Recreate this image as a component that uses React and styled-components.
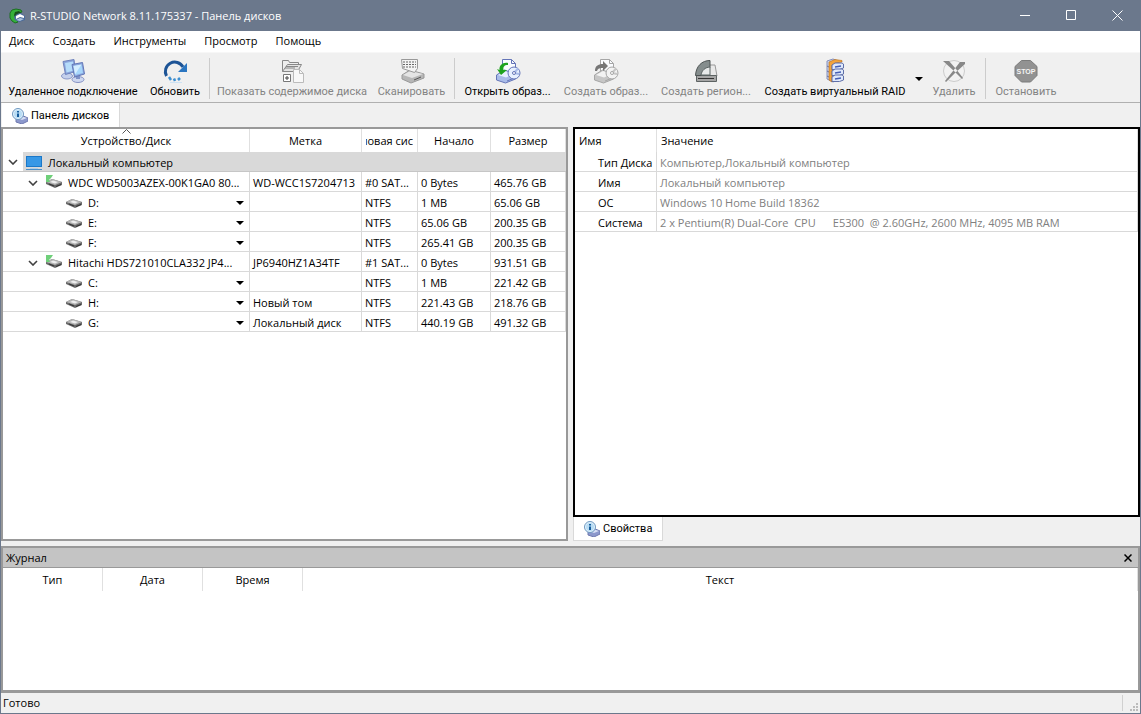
import React from "react";
import styled, { createGlobalStyle } from "styled-components";

const disks = [
  {
    id: "wdc",
    name: "WDC WD5003AZEX-00K1GA0 80...",
    label: "WD-WCC1S7204713",
    fs: "#0 SAT...",
    start: "0 Bytes",
    size: "465.76 GB",
    volumes: [
      { id: "d", name: "D:", label: "", fs: "NTFS", start: "1 MB", size: "65.06 GB" },
      { id: "e", name: "E:", label: "", fs: "NTFS", start: "65.06 GB", size: "200.35 GB" },
      { id: "f", name: "F:", label: "", fs: "NTFS", start: "265.41 GB", size: "200.35 GB" }
    ]
  },
  {
    id: "hitachi",
    name: "Hitachi HDS721010CLA332 JP4...",
    label: "JP6940HZ1A34TF",
    fs: "#1 SAT...",
    start: "0 Bytes",
    size: "931.51 GB",
    volumes: [
      { id: "c", name: "C:", label: "", fs: "NTFS", start: "1 MB", size: "221.42 GB" },
      { id: "h", name: "H:", label: "Новый том", fs: "NTFS", start: "221.43 GB", size: "218.76 GB" },
      { id: "g", name: "G:", label: "Локальный диск", fs: "NTFS", start: "440.19 GB", size: "491.32 GB" }
    ]
  }
];

const properties = [
  { name: "Тип Диска", value: "Компьютер,Локальный компьютер" },
  { name: "Имя", value: "Локальный компьютер" },
  { name: "ОС", value: "Windows 10 Home Build 18362" },
  {
    name: "Система",
    value: "2 x Pentium(R) Dual-Core  CPU      E5300  @ 2.60GHz, 2600 MHz, 4095 MB RAM"
  }
];

const menu = ["Диск", "Создать", "Инструменты", "Просмотр", "Помощь"];

const tools = [
  [
    { text: "Удаленное подключение", width: 140, icon: <RemoteIcon /> },
    { text: "Обновить", width: 62, icon: <RefreshIcon /> }
  ],
  [
    { text: "Показать содержимое диска", width: 158, icon: <FolderIcon />, disabled: true },
    { text: "Сканировать", width: 79, icon: <ScanIcon />, disabled: true }
  ],
  [
    { text: "Открыть образ...", width: 99, icon: <ImageIcon open /> },
    { text: "Создать образ...", width: 96, icon: <ImageIcon />, disabled: true },
    { text: "Создать регион...", width: 102, icon: <RegionIcon />, disabled: true },
    { text: "Создать виртуальный RAID", width: 154, icon: <RaidIcon />, arrow: true },
    { text: "Удалить", width: 56, icon: <DeleteIcon />, disabled: true }
  ],
  [{ text: "Остановить", width: 74, icon: <StopIcon />, disabled: true }]
];

export default function App() {
  return (
    <>
      <GlobalStyle />
      <Window>
        <TitleBar>
          <LogoIcon />
          <Title>R-STUDIO Network 8.11.175337 - Панель дисков</Title>
          <Caption aria-label="Свернуть">
            <svg width="11" height="11" stroke="#fff">
              <path d="M0 5.5h10" />
            </svg>
          </Caption>
          <Caption aria-label="Развернуть">
            <svg width="11" height="11" stroke="#fff" fill="none">
              <path d="M.5 .5h9v9h-9z" />
            </svg>
          </Caption>
          <Caption aria-label="Закрыть">
            <svg width="11" height="11" stroke="#fff">
              <path d="M.5 .5l10 10M10.500 .5l-10 10" />
            </svg>
          </Caption>
        </TitleBar>

        <Menu>
          {menu.map(item => (
            <MenuItem key={item}>{item}</MenuItem>
          ))}
        </Menu>

        <Toolbar>
          {tools.map((group, i) => (
            <Group key={i}>
              {group.map(tool => (
                <React.Fragment key={tool.text}>
                  <Tool $width={tool.width} disabled={tool.disabled}>
                    {tool.icon}
                    <span>{tool.text}</span>
                  </Tool>
                  {tool.arrow && (
                    <ToolArrow aria-label="Типы RAID">
                      <ArrowIcon />
                    </ToolArrow>
                  )}
                </React.Fragment>
              ))}
            </Group>
          ))}
        </Toolbar>

        <TopTabs>
          <Tab>
            <InfoDiskIcon />
            Панель дисков
          </Tab>
        </TopTabs>

        <Main>
          <Column>
            <Panel $color="#999">
              <DiskTable />
            </Panel>
          </Column>
          <Column>
            <Panel $color="#000">
              <PropertyTable />
            </Panel>
            <BottomTabs>
              <Tab $bottom>
                <InfoDiskIcon />
                Свойства
              </Tab>
            </BottomTabs>
          </Column>
        </Main>

        <Log>
          <LogTitle>
            <span>Журнал</span>
            <LogClose aria-label="Закрыть журнал">
              <svg width="8" height="8" stroke="#000" strokeWidth="1.500">
                <path d="M.5 .5l7 7M7.500 .5l-7 7" />
              </svg>
            </LogClose>
          </LogTitle>
          <Table>
            <colgroup>
              <col width="100" />
              <col width="100" />
              <col width="100" />
              <col />
            </colgroup>
            <thead>
              <tr>
                <Th>Тип</Th>
                <Th>Дата</Th>
                <Th>Время</Th>
                <Th>Текст</Th>
              </tr>
            </thead>
          </Table>
        </Log>

        <Status>
          <span>Готово</span>
          <Grip>
            <svg width="8" height="8" fill="#bbb">
              <path d="M6 0h2v2h-2zM3 3h2v2h-2zM6 3h2v2h-2zM0 6h2v2h-2zM3 6h2v2h-2zM6 6h2v2h-2z" />
            </svg>
          </Grip>
        </Status>
      </Window>
    </>
  );
}

function DiskTable() {
  return (
    <Table>
      <colgroup>
        <col />
        <col width="112" />
        <col width="56" />
        <col width="73" />
        <col width="75" />
      </colgroup>
      <thead>
        <tr>
          <Th>
            <SortMark>
              <svg width="9" height="5" stroke="#555" fill="none">
                <path d="M.5 4.500l4-4 4 4" />
              </svg>
            </SortMark>
            Устройство/Диск
          </Th>
          <Th>Метка</Th>
          <Th>
            <Clip>
              <span>ловая сис</span>
            </Clip>
          </Th>
          <Th>Начало</Th>
          <Th>Размер</Th>
        </tr>
      </thead>
      <tbody>
        <tr>
          <RootCell colSpan={5}>
            <RootLine>
              <Expander aria-label="Свернуть ветвь">
                <ChevronIcon />
              </Expander>
              <Selected>
                <MonitorIcon />
                <span>Локальный компьютер</span>
              </Selected>
            </RootLine>
          </RootCell>
        </tr>
        {disks.map(disk => (
          <React.Fragment key={disk.id}>
            <tr>
              <Td>
                <Node $level={1}>
                  <Expander aria-label="Свернуть ветвь">
                    <ChevronIcon />
                  </Expander>
                  <DriveIcon online />
                  <Name>{disk.name}</Name>
                </Node>
              </Td>
              <Cells row={disk} />
            </tr>
            {disk.volumes.map(volume => (
              <tr key={volume.id}>
                <Td>
                  <Node $level={3}>
                    <DriveIcon />
                    <Name>{volume.name}</Name>
                    <VolumeMenu aria-label={volume.name}>
                      <ArrowIcon />
                    </VolumeMenu>
                  </Node>
                </Td>
                <Cells row={volume} />
              </tr>
            ))}
          </React.Fragment>
        ))}
      </tbody>
    </Table>
  );
}

function Cells({ row }) {
  return (
    <>
      <Td>{row.label}</Td>
      <Td>{row.fs}</Td>
      <Td>{row.start}</Td>
      <Td>{row.size}</Td>
    </>
  );
}

function PropertyTable() {
  return (
    <Table>
      <colgroup>
        <col width="82" />
        <col />
      </colgroup>
      <thead>
        <tr>
          <Th $left>Имя</Th>
          <Th $left>Значение</Th>
        </tr>
      </thead>
      <tbody>
        {properties.map(item => (
          <tr key={item.name}>
            <PropName>{item.name}</PropName>
            <PropValue>{item.value}</PropValue>
          </tr>
        ))}
      </tbody>
    </Table>
  );
}

function LogoIcon() {
  return (
    <svg width="16" height="16" viewBox="0 0 16 16">
      <path d="M3 2l4-1 5 1 1 2-4 1-3 3 1 4 2 2-3 1-3-2-2-3V5z" fill="#35b03a" stroke="#1c6e22" />
      <path d="M6 4l4-1 2 2-4 1-2 3-1-2z" fill="#174d1d" />
      <path d="M5 9l3-3 4-1 4 3v4l-6 2-4-2z" fill="#4a6a9a" />
      <path d="M7 8l4-2 4 2v2l-4-1-4 2z" fill="#fff" />
      <path d="M7 12l4-2 4 1-4 2z" fill="#a9c0dc" />
    </svg>
  );
}

function RemoteIcon() {
  return (
    <svg width="26" height="26" viewBox="0 0 26 26">
      <ellipse cx="7" cy="18" rx="5.500" ry="3" fill="#c4d0ec" stroke="#8a98c8" />
      <path d="M3 3.500l11-2 1.500 12-10 3z" fill="#8aa5dc" stroke="#6f83bd" />
      <path d="M5 5l8-1.500 1 9-7.500 2z" fill="#b5dcfa" />
      <ellipse cx="18" cy="21.500" rx="6" ry="3" fill="#cdd7f0" stroke="#8592c4" />
      <path d="M16 17h4v4h-4z" fill="#7f92c8" />
      <path d="M12 6.500l10.500-2 2 11.500-10 3z" fill="#8aa5dc" stroke="#6378b8" />
      <path d="M13.500 8l8-1.500 1.500 8.500-7.500 2z" fill="#a6d6fb" />
      <path d="M13.500 8l8-1.500-6.500 10z" fill="#d4eeff" />
    </svg>
  );
}

function RefreshIcon() {
  return (
    <svg width="26" height="26" viewBox="0 0 26 26">
      <path d="M4.500 18A9 9 0 0 1 21 9" fill="none" stroke="#1d5496" strokeWidth="3" />
      <path d="M25 5v9h-9z" fill="#2b76c1" />
      <path d="M7 19l2 3M12 20.500l1 2.500M16 22l2-2" stroke="#3d8fd1" strokeWidth="2.500" />
      <path d="M8 24.500h12" stroke="#cfe3f3" />
    </svg>
  );
}

function FolderIcon() {
  return (
    <svg width="26" height="26" viewBox="0 0 26 26" fill="#eee" stroke="#888">
      <path d="M3.500 13.500v-11h6l1 2h9v4" />
      <path d="M3.500 13.500l5-7h14l-4 7z" fill="#e4e4e4" />
      <path d="M6 10h10M7 8.500h12" />
      <path d="M4.500 16.500h7v7h-7z" fill="#fff" stroke="#777" />
      <path d="M8 18v4M6 20h4" stroke="#444" />
      <path d="M14.500 11.500h6l4 4v9h-10z" fill="#f8f8f8" stroke="#bbb" />
      <path d="M20.500 11.500v4h4" fill="none" stroke="#bbb" />
    </svg>
  );
}

function ScanIcon() {
  return (
    <svg width="26" height="26" viewBox="0 0 26 26">
      <path d="M3 17l8-5 14 4v4l-13 5-9-4z" fill="#b6b6b6" stroke="#999" />
      <path d="M4 17l7-4 13 3-11 4z" fill="#e4e4e4" />
      <path d="M15 22l7-3" stroke="#555" />
      <path d="M2.500 1.500h16v9l-3 4-12-4z" fill="#f4f4f4" stroke="#999" />
      <path d="M4 4h13M4 6.500h13M4 9h13" stroke="#666" strokeDasharray="2 1" />
    </svg>
  );
}

function ImageIcon({ open }) {
  const c = open
    ? { line: "#6575b8", disk: "#a9bce9", light: "#e7f0ff", arrow: "#1fa31f" }
    : { line: "#a6a6a6", disk: "#c6c6c6", light: "#f3f3f3", arrow: "#777" };

  return (
    <svg width="26" height="26" viewBox="0 0 26 26">
      <path d="M7.500 1.500h9l4 4v12h-13z" fill="#fafcff" stroke={c.line} />
      <path d="M16.500 1.500v4h4" fill="none" stroke={c.line} />
      <path d="M1.500 17l8-5 11 4v5l-10 4-9-3z" fill={c.disk} stroke={c.line} />
      <path d="M3 17l7-4 9 3-8 3.500z" fill={c.light} />
      <path d="M12 23l6-2.500" stroke={c.line} />
      <circle cx="19" cy="15" r="6" fill={c.light} stroke={c.line} />
      <path d="M19 15l4-4.500M19 15l5 1" stroke={c.disk} strokeWidth="2" />
      <circle cx="19" cy="15" r="1.500" fill="#fff" stroke={c.line} />
      {open ? (
        <path d="M13 5C8 4 4 7 4.500 12L2 11l4 6 6-5-3.500 0C8 9 9 7 13 7z" fill={c.arrow} />
      ) : (
        <path d="M2 13C2 8 5 6 10 6V3l5 5-5 5v-3C7 10 5 10 4 13z" fill={c.arrow} />
      )}
    </svg>
  );
}

function RegionIcon() {
  return (
    <svg width="26" height="26" viewBox="0 0 26 26">
      <path d="M17 7h5l2 11H8z" fill="#e9e9e9" stroke="#999" />
      <path d="M3.500 17.500h20v6h-20z" fill="#a5a5a5" stroke="#5d6363" />
      <path d="M5 20.500h16" stroke="#333" />
      <path d="M2.500 17.500C3 8 9 2.500 17 2.500v7c-5 0-8 4-9 8z" fill="#858d8d" stroke="#4d5353" />
      <path d="M8 17C9 12 12 9.500 17 9V17z" fill="#e8eaea" stroke="#5d6666" />
    </svg>
  );
}

function RaidIcon() {
  return (
    <svg width="26" height="26" viewBox="0 0 26 26">
      <path d="M5 3l6-2 5 2v19l-5 2-6-3z" fill="#c9d4ee" stroke="#8690bd" />
      <path d="M5 8l4 2M5 13l4 2M5 18l4 2" stroke="#6672a6" />
      <path d="M7 4l6-2.500 7 1V4l-6 1-4 2v17l-3-2z" fill="#f2a43c" stroke="#b76d17" strokeWidth=".6" />
      <path d="M10 7l3-2h7l1.500 1v4l-4 1.500H10z" fill="#dfe9fb" stroke="#5f6fa8" />
      <path d="M10 13l3-2h7l1.500 1v4l-4 1.500H10z" fill="#dfe9fb" stroke="#5f6fa8" />
      <path d="M10 19l3-2h7l1.500 1v4l-4 1.500H10z" fill="#dfe9fb" stroke="#5f6fa8" />
      <path d="M13 9l6-1M13 15l6-1M13 21l6-1" stroke="#4560b6" strokeWidth="1.500" />
    </svg>
  );
}

function DeleteIcon() {
  return (
    <svg width="26" height="26" viewBox="0 0 26 26">
      <circle cx="13" cy="13" r="10.500" fill="#f2f2f2" stroke="#ccc" />
      <path d="M2 3l6 0 7 8 7 9-1 1-8-8zM24 4l-5 0-7 9-8 10 1 1 9-9L24 6z" fill="#888" />
    </svg>
  );
}

function StopIcon() {
  return (
    <svg width="26" height="26" viewBox="0 0 26 26">
      <path d="M8.500 2.500h9l6.500 6v9l-6.500 6.500h-9L2 17.500v-9z" fill="#929292" stroke="#7b7b7b" />
      <text
        x="13"
        y="16"
        fill="#f4f4f4"
        fontFamily="Liberation Sans"
        fontSize="7"
        fontWeight="bold"
        textAnchor="middle"
      >
        STOP
      </text>
    </svg>
  );
}

function InfoDiskIcon() {
  return (
    <svg width="16" height="16" viewBox="0 0 16 16">
      <path d="M4 10l5-3 7 3v3l-6 3-6-2z" fill="#8c98cc" stroke="#6f7ab0" />
      <path d="M5 10l4-2 6 2-5 2z" fill="#d6def4" />
      <circle cx="6" cy="6" r="5.500" fill="#e3f3fd" stroke="#6d97c0" />
      <circle cx="6" cy="6" r="4" fill="#b8dcf4" />
      <path d="M5 3h2v1.500H5zM5 5.500h2V9H5z" fill="#145c9c" />
    </svg>
  );
}

function MonitorIcon() {
  return (
    <svg width="16" height="16" viewBox="0 0 16 16">
      <path d="M0 1h16v11H0z" fill="#1b78c8" />
      <path d="M1 2h14v9H1z" fill="#3798e6" />
      <path d="M0 14.500h16" stroke="#4d90c8" />
      <path d="M4 13.500h8" stroke="#b0cfe8" />
    </svg>
  );
}

function DriveIcon({ online }) {
  return (
    <svg width="16" height="16" viewBox="0 0 16 16">
      <path d="M0 7l6-3 10 3v3l-7 3-9-4z" fill="#6a6a6a" />
      <path d="M0 7l6-3 10 3-7 3z" fill="#b4b4b4" />
      <path d="M4 7l3-1.500L12 7l-3 1.500z" fill="#eee" />
      <path d="M3 9l5 2M10 11.500l5-2" stroke="#333" />
      {online && <path d="M0 0h7L5 3l-2 2 1 2-4 0z" fill="#6fd07a" />}
    </svg>
  );
}

function ChevronIcon() {
  return (
    <svg width="10" height="6" viewBox="0 0 10 6" fill="none" stroke="#404040" strokeWidth="1.600">
      <path d="M1 1l4 4 4-4" />
    </svg>
  );
}

function ArrowIcon() {
  return (
    <svg width="8" height="4" viewBox="0 0 8 4">
      <path d="M0 0h8L4 4z" />
    </svg>
  );
}

const GlobalStyle = createGlobalStyle`
  * {
    box-sizing: border-box;
  }
  body {
    margin: 0;
    font: 11px/16px "Open Sans", "Noto Sans", sans-serif;
    color: #000;
  }
  button {
    display: flex;
    align-items: center;
    justify-content: center;
    padding: 0;
    border: 0;
    background: none;
    font: inherit;
    color: inherit;
    white-space: nowrap;
  }
  svg {
    flex: none;
    display: block;
  }
`;

const Window = styled.div`
  display: flex;
  flex-direction: column;
  min-height: 100vh;
  border: solid #6b788c;
  border-width: 0 1px 1px;
  background: #f0f0f0;
`;

const TitleBar = styled.header`
  display: flex;
  align-items: center;
  height: 31px;
  padding-left: 8px;
  background: #6b788c;
  color: #fff;
`;

const Title = styled.span`
  flex: 1;
  margin-left: 5px;
`;

const Caption = styled.button`
  width: 46px;
  height: 30px;
`;

const Menu = styled.nav`
  display: flex;
  gap: 2px;
  height: 22px;
  padding-bottom: 1px;
  background: #fff;
  border-bottom: 1px solid #f7f7f7;
`;

const MenuItem = styled.button`
  padding: 0 8px;
`;

const Toolbar = styled.div`
  display: flex;
  height: 50px;
  padding: 5px 2px 3px;
  border-bottom: 1px solid #b0b0b0;
  font-family: Roboto, sans-serif;
`;

const Group = styled.div`
  display: flex;
  gap: 1px;

  & + & {
    margin-left: 3px;
    padding-left: 3px;
    border-left: 1px solid #ccc;
  }
`;

const Tool = styled.button`
  flex-direction: column;
  width: ${props => props.$width}px;
  line-height: 16px;

  &:disabled {
    color: #838383;
  }
`;

const ToolArrow = styled.button`
  width: 12px;
`;

const TopTabs = styled.div`
  display: flex;
  height: 24px;
  padding-left: 1px;
`;

const Tab = styled.button`
  && {
    font-family: Roboto, sans-serif;
  }
  gap: 3px;
  padding: 1px 10px 0;
  background: #fff;
  border: solid #d9d9d9;
  border-width: ${props => (props.$bottom ? "0 1px 1px" : "0 1px 0 0")};
`;

const Main = styled.main`
  display: flex;
  flex: 1;
  gap: 5px;
`;

const Column = styled.section`
  display: flex;
  flex-direction: column;
  flex: 1 1 0;
  min-width: 0;
`;

const Panel = styled.div`
  flex: 1;
  background: #fff;
  border: 2px solid ${props => props.$color};
`;

const BottomTabs = styled.div`
  display: flex;
  height: 24px;
`;

const Table = styled.table`
  width: 100%;
  table-layout: fixed;
  border-collapse: separate;
  border-spacing: 0;
`;

const Th = styled.th`
  height: 23px;
  padding: 0 4px;
  border-right: 1px solid #e0e0e0;
  font-weight: normal;
  text-align: ${props => (props.$left ? "left" : "center")};
  position: relative;
`;

const SortMark = styled.span`
  position: absolute;
  top: 0;
  left: 50%;
  margin-left: -4px;
`;

const Clip = styled.div`
  display: flex;
  justify-content: flex-end;
  overflow: hidden;
  white-space: nowrap;
`;

const Td = styled.td`
  height: 20px;
  padding: 2px 3px 0;
  border: solid #d9d9d9;
  border-width: 0 1px 1px 0;
  overflow: hidden;
  white-space: nowrap;
`;

const RootCell = styled.td`
  padding: 0;
`;

const RootLine = styled.div`
  display: flex;
  height: 20px;
  padding-left: 3px;
  gap: 3px;
  border-bottom: 1px solid #c6c6c6;
`;

const Selected = styled.div`
  display: flex;
  flex: 1;
  align-items: center;
  gap: 6px;
  padding: 2px 0 0 3px;
  background: #d9d9d9;
`;

const Node = styled.div`
  display: flex;
  align-items: center;
  gap: 6px;
  padding-left: ${props => props.$level * 20}px;
`;

const Expander = styled.button`
  align-self: center;
  width: 14px;
  height: 16px;
`;

const Name = styled.span`
  flex: 1;
`;

const VolumeMenu = styled.button`
  width: 12px;
  height: 16px;
`;

const PropName = styled(Td)`
  padding-left: 23px;
  padding-right: 0;
`;

const PropValue = styled(Td)`
  color: #808080;
  white-space: pre;
`;

const Log = styled.section`
  min-height: 147px;
  margin-top: 5px;
  background: #fff;
  border: 2px solid #999;
  border-bottom-width: 3px;
`;

const LogTitle = styled.div`
  display: flex;
  align-items: center;
  justify-content: space-between;
  height: 20px;
  padding: 0 3px;
  background: #c4c4c4;
  border-bottom: 1px solid #999;
`;

const LogClose = styled.button`
  width: 14px;
  height: 16px;
`;

const Status = styled.footer`
  display: flex;
  align-items: center;
  justify-content: space-between;
  height: 20px;
  padding: 0 2px;
`;

const Grip = styled.div`
  display: flex;
  align-items: flex-end;
  height: 16px;
  padding-left: 7px;
  border-left: 1px solid #d0d0d0;
`;
